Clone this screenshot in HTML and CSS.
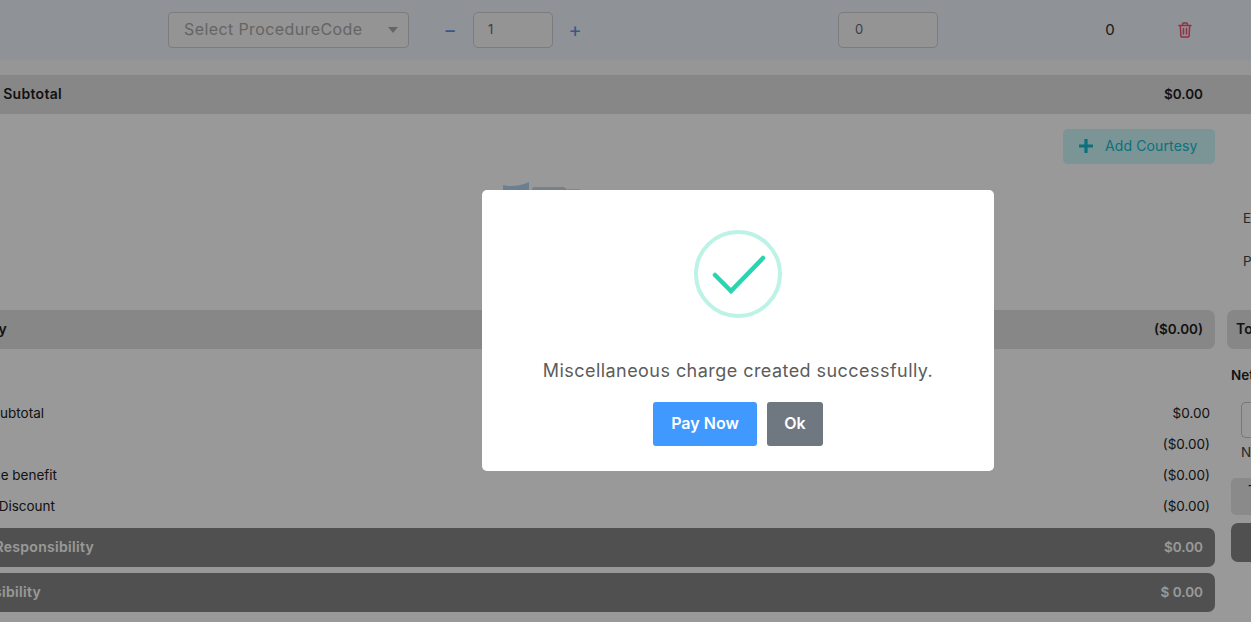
FILE: index.html
```html
<!DOCTYPE html>
<html lang="en">
<head>
<meta charset="utf-8">
<title>Miscellaneous charge</title>
<link rel="stylesheet" href="styles.css">
</head>
<body>
<div class="page">
  <section class="item-row">
    <div class="select"><span>Select ProcedureCode</span><i class="caret"></i></div>
    <div class="stepper">
      <span class="step">−</span>
      <input class="field qty" value="1">
      <span class="step">+</span>
    </div>
    <input class="field price" value="0">
    <span class="line-total">0</span>
    <svg class="trash" viewBox="0 0 14 16" width="14" height="16" aria-hidden="true"><path d="M1 3.5h12M4.6 3.5V2a1 1 0 0 1 1-1h2.8a1 1 0 0 1 1 1v1.500M2.300 3.500l.6 10.300a1.200 1.200 0 0 0 1.200 1.200h5.800a1.200 1.200 0 0 0 1.200-1.200l.6-10.300M5.500 6.500v5.500M8.500 6.500v5.500" fill="none" stroke="currentColor" stroke-width="1.500" stroke-linecap="round"/></svg>
  </section>

  <div class="sub-wrap">
    <section class="bar bar-light bar-sub">
      <span class="lbl end-62">Subtotal</span><span class="val">$0.00</span>
    </section>
  </div>

  <div class="courtesy-row">
    <button class="add-btn">
      <svg class="plus" viewBox="0 0 14 14" width="14" height="14" aria-hidden="true"><path d="M7 0v14M0 7h14" fill="none" stroke="currentColor" stroke-width="3.200"/></svg>
      Add Courtesy
    </button>
  </div>

  <div class="lower">
    <div class="main">
      <div class="art">
        <svg width="80" height="20" viewBox="0 0 80 20" aria-hidden="true"><path d="M1 3Q14 6 27 0V20H1Z" fill="#b4d4f2"/><path d="M30 7Q30 5 33 5H62L66 8V20H30Z" fill="#c6d8e6"/><path d="M66 7H78V9H66Z" fill="#d5e0e8"/></svg>
      </div>
      <div class="bar bar-light bar-round"><span class="lbl end-7">Summary</span><span class="val">($0.00)</span></div>
      <div class="rows">
        <div class="row"><span class="txt end-44">Subtotal</span><span>$0.00</span></div>
        <div class="row"><span></span><span>($0.00)</span></div>
        <div class="row"><span class="txt end-57">Insurance benefit</span><span>($0.00)</span></div>
        <div class="row"><span class="txt end-55">Discount</span><span>($0.00)</span></div>
      </div>
      <div class="bar bar-dark bar-round"><span class="lbl end-94">Patient Responsibility</span><span class="val">$0.00</span></div>
      <div class="bar bar-dark bar-round bar-gap"><span class="lbl end-41">Responsibility</span><span class="val">$ 0.00</span></div>
    </div>
    <aside class="side">
      <div class="side-panel"><p>Estimate</p><p>Payment</p></div>
      <div class="side-bar">Total</div>
      <div class="net">Net Amount</div>
      <div class="net-input"></div>
      <div class="note">Note</div>
      <div class="side-btn">Take</div>
      <div class="side-dark"></div>
    </aside>
  </div>
</div>

<div class="overlay">
  <div class="modal" role="dialog">
    <svg class="success" viewBox="0 0 88 88" width="88" height="88" aria-hidden="true">
      <circle cx="44" cy="44" r="42" fill="none" stroke="#bdf2e6" stroke-width="4"/>
      <path d="M21 45L37 61L69 28" fill="none" stroke="#2bd4b0" stroke-width="4.500" stroke-linecap="round" stroke-linejoin="miter"/>
    </svg>
    <p class="message">Miscellaneous charge created successfully.</p>
    <div class="actions">
      <button class="btn btn-primary">Pay Now</button>
      <button class="btn btn-muted">Ok</button>
    </div>
  </div>
</div>
</body>
</html>
```
FILE: styles.css
```css
* { box-sizing: border-box; }
html, body { margin: 0; height: 100%; }
body {
  overflow: hidden;
  background: #fff;
  color: #222;
  font-family: "Inter", "Noto Sans", sans-serif;
  font-size: 14px;
}
.page { width: 1251px; height: 622px; overflow: hidden; }

/* item row */
.item-row {
  display: flex;
  align-items: center;
  height: 60px;
  padding-left: 168px;
  background: #eef3fa;
}
.select {
  display: flex;
  align-items: center;
  justify-content: space-between;
  width: 241px;
  height: 36px;
  padding: 0 10px 2px 15px;
  background: #f7f7f7;
  border: 1px solid #cfcfcf;
  border-radius: 4px;
  color: #a8a8a8;
  font-size: 16px;
  letter-spacing: .4px;
}
.caret { margin-top: 2px; border: 5px solid transparent; border-top: 6px solid #aaa; border-bottom: 0; }
.stepper { display: flex; align-items: center; margin-left: 35px; }
.step { width: 14px; margin-left: -1px; text-align: center; color: #5b93e6; font-size: 20px; line-height: 1; }
.step + .field + .step { margin-left: 0; }
.field {
  height: 36px;
  padding: 0 14px 2px;
  background: #f7f7f7;
  border: 1px solid #cfcfcf;
  border-radius: 5px;
  color: #6a6a6a;
  font: inherit;
  font-size: 13px;
}
.qty { width: 80px; margin: 0 15px 0 16px; }
.price { width: 100px; padding-left: 16px; margin-left: 256px; }
.line-total { width: 20px; margin: 0 0 2px 162px; text-align: center; color: #2c2c2c; font-size: 15px; }
.trash { margin-left: 58px; color: #f5506e; }

/* bars */
.bar {
  display: flex;
  align-items: center;
  justify-content: space-between;
  height: 39px;
  padding: 0 12px 2px 0;
  font-weight: 600;
  font-size: 14px;
}
.sub-wrap { padding-top: 15px; background: #fbfbfb; }
.bar-sub { padding-right: 48px; }
.bar-light { background: #e2e2e2; color: #1d1d1d; }
.bar-dark { background: #868686; color: #fff; }
.bar-round { border-radius: 0 7px 7px 0; }
.bar-gap { margin-top: 6px; }
.val { font-size: 13.5px; white-space: nowrap; }

/* labels clipped by the left edge: right end fixed, overflow to the left */
.lbl, .txt { display: flex; justify-content: flex-end; white-space: nowrap; }
.lbl { letter-spacing: .3px; }
.end-7 { width: 7px; }
.end-41 { width: 41px; }
.end-44 { width: 44px; }
.end-55 { width: 55px; }
.end-57 { width: 57px; }
.end-62 { width: 62px; }
.end-94 { width: 94px; }

/* courtesy */
.courtesy-row { display: flex; justify-content: flex-end; padding: 15px 36px 0 0; height: 68px; }
.add-btn {
  display: flex;
  align-items: center;
  width: 152px;
  height: 35px;
  padding: 0 0 2px 16px;
  background: #cef7f9;
  border: 0;
  border-radius: 5px;
  color: #12bcd0;
  font: inherit;
  font-size: 14px;
  letter-spacing: .12px;
}
.plus { margin-right: 12px; }

/* lower */
.lower { display: grid; grid-template-columns: 1215px 1fr; column-gap: 12px; }
.art { height: 128px; padding-left: 502px; }
.art svg { display: block; }
.rows { height: 179px; padding-top: 48px; font-size: 13.5px; color: #222; }
.row { display: flex; justify-content: space-between; align-items: center; height: 31px; padding-right: 5px; }

/* side */
.side { min-width: 0; overflow: hidden; }
.side-panel { height: 117px; margin: 11px 0 0 -1px; padding-left: 16px; border-left: 1px solid #f0f0f0; font-size: 13.5px; color: #444; }
.side-panel p { margin: 0; height: 43px; padding-top: 16px; line-height: 18px; white-space: nowrap; }
.side-bar { height: 39px; padding-left: 9px; line-height: 38px; background: #e2e2e2; border-radius: 7px 0 0 7px; font-weight: 600; font-size: 14px; white-space: nowrap; }
.net { margin: 16px 0 0 4px; font-weight: 600; font-size: 13.5px; line-height: 20px; white-space: nowrap; }
.net-input { height: 36px; margin: 17px 0 0 14px; background: #fff; border: 1px solid #c8c8c8; border-right: 0; border-radius: 5px 0 0 5px; }
.note { margin: 6px 0 0 14px; line-height: 17px; font-size: 13.5px; color: #444; white-space: nowrap; }
.side-btn { height: 37px; margin: 17px 0 0 4px; padding-left: 17px; line-height: 26px; background: #e6e6e6; border-radius: 5px 0 0 5px; white-space: nowrap; }
.side-dark { height: 39px; margin: 8px 0 0 4px; background: #868686; border-radius: 7px 0 0 7px; }

/* modal */
.overlay {
  position: fixed;
  inset: 0;
  padding: 190px 0 0 482px;
  background: rgba(0, 0, 0, .4);
}
.modal {
  display: flex;
  flex-direction: column;
  align-items: center;
  width: 512px;
  height: 281px;
  padding-top: 40px;
  background: #fff;
  border-radius: 5px;
}
.success { display: block; }
.message { margin: 40px 0 0; color: #5c5c5c; font-size: 18px; line-height: 26px; letter-spacing: .45px; white-space: nowrap; }
.actions { display: flex; gap: 10px; margin-top: 18px; }
.btn {
  height: 44px;
  padding: 0 0 2px;
  border: 0;
  border-radius: 3px;
  color: #fff;
  font: inherit;
  font-size: 16px;
  font-weight: 600;
}
.btn-primary { width: 104px; background: #3f99ff; }
.btn-muted { width: 56px; background: #6f7880; }
```
